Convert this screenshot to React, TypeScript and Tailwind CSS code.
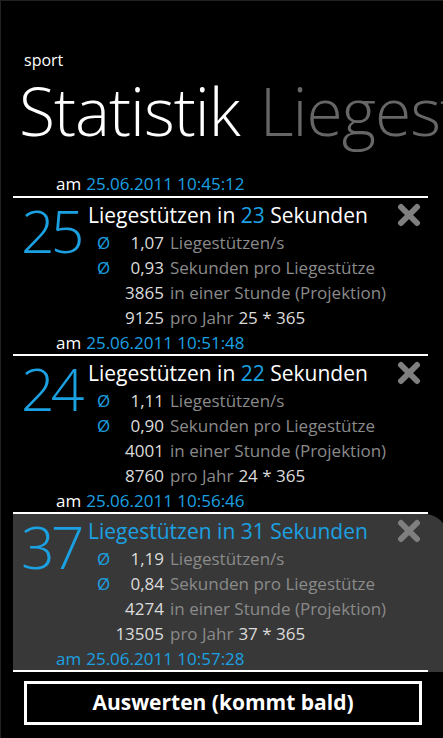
const font = { fontFamily: '"Open Sans", "Noto Sans", sans-serif' };

type Entry = {
  count: number;
  secs: number;
  rate: string;
  perRep: string;
  hour: number;
  year: number;
  date: string;
  selected?: boolean;
};

const entries: Entry[] = [
  { count: 25, secs: 23, rate: "1,07", perRep: "0,93", hour: 3865, year: 9125, date: "25.06.2011 10:51:48" },
  { count: 24, secs: 22, rate: "1,11", perRep: "0,90", hour: 4001, year: 8760, date: "25.06.2011 10:56:46" },
  { count: 37, secs: 31, rate: "1,19", perRep: "0,84", hour: 4274, year: 13505, date: "25.06.2011 10:57:28", selected: true },
];

function CloseIcon() {
  return (
    <svg width="24" height="24" viewBox="0 0 24 24" className="block">
      <path d="M4 4 L20 20 M20 4 L4 20" stroke="#7f7f7f" strokeWidth="6" strokeLinecap="round" />
    </svg>
  );
}

function Row({ dot, value, label, extra }: { dot?: boolean; value: string | number; label: string; extra?: string }) {
  return (
    <div className="flex h-[25px] items-center text-[17px] leading-none">
      <div className="flex w-[76px] items-center justify-between pl-[9px]">
        <span className="text-[#1ba1e2]">{dot ? "Ø" : ""}</span>
        <span className="text-[#dcdcdc]">{value}</span>
      </div>
      <span className="ml-[6px] whitespace-nowrap text-[#8a8a8a]">{label}</span>
      {extra ? <span className="ml-[5px] text-[#dcdcdc]">{extra}</span> : null}
    </div>
  );
}

function Item({ e }: { e: Entry }) {
  return (
    <div className={e.selected ? "-mr-[4px] rounded-tr-[22px] bg-[#383838]" : ""}>
      <div className="relative w-[415px]">
        <div className="flex">
          <div className="w-[75px] pl-[8px] pt-[3px] text-[59px] font-light leading-none tracking-[-4px] text-[#1ba1e2]">
            {e.count}
          </div>
          <div className="flex-1">
            <div className="flex h-[32px] items-center pt-[2px] text-[21px] leading-none">
              {e.selected ? (
                <span className="text-[#1ba1e2]">
                  Liegestützen in {e.secs} Sekunden
                </span>
              ) : (
                <span className="text-white">
                  Liegestützen in <span className="text-[#1ba1e2]">{e.secs}</span> Sekunden
                </span>
              )}
            </div>
            <Row dot value={e.rate} label="Liegestützen/s" />
            <Row dot value={e.perRep} label="Sekunden pro Liegestütze" />
            <Row value={e.hour} label="in einer Stunde (Projektion)" />
            <Row value={e.year} label="pro Jahr" extra={`${e.count} * 365`} />
          </div>
        </div>
        <div className="flex h-[24px] items-center pl-[43px] text-[17px] leading-none">
          <span className={e.selected ? "text-[#1ba1e2]" : "text-white"}>am</span>
          <span className="ml-[5px] text-[#1ba1e2]">{e.date}</span>
        </div>
        <div className="absolute right-[7px] top-[5px]">
          <CloseIcon />
        </div>
      </div>
      <div className="h-[2px] w-[415px] bg-white" />
    </div>
  );
}

export default function App() {
  return (
    <div
      className="relative h-[738px] w-[443px] overflow-hidden border-l border-t border-[#222] bg-black"
      style={font}
    >
      <div className="pl-[23px] pt-[49px] text-[16px] leading-[20px] text-white">sport</div>
      <div className="mt-[4px] flex whitespace-nowrap pl-[18px] text-[66px] font-light leading-[72px] tracking-[-1px]">
        <span className="text-white">Statistik</span>
        <span className="ml-[20px] text-[#666]">Liegestützen</span>
      </div>
      <div className="ml-[12px] mt-[25px]">
        <div className="flex h-[25px] items-center pl-[43px] text-[17px] leading-none">
          <span className="text-white">am</span>
          <span className="ml-[5px] text-[#1ba1e2]">25.06.2011 10:45:12</span>
        </div>
        <div className="h-[2px] w-[415px] bg-white" />
        {entries.map((e) => (
          <Item key={e.date} e={e} />
        ))}
      </div>
      <div className="ml-[23px] mt-[9px] flex h-[44px] w-[398px] items-center justify-center border-[3px] border-white text-[21px] font-bold text-white">
        Auswerten (kommt bald)
      </div>
    </div>
  );
}
